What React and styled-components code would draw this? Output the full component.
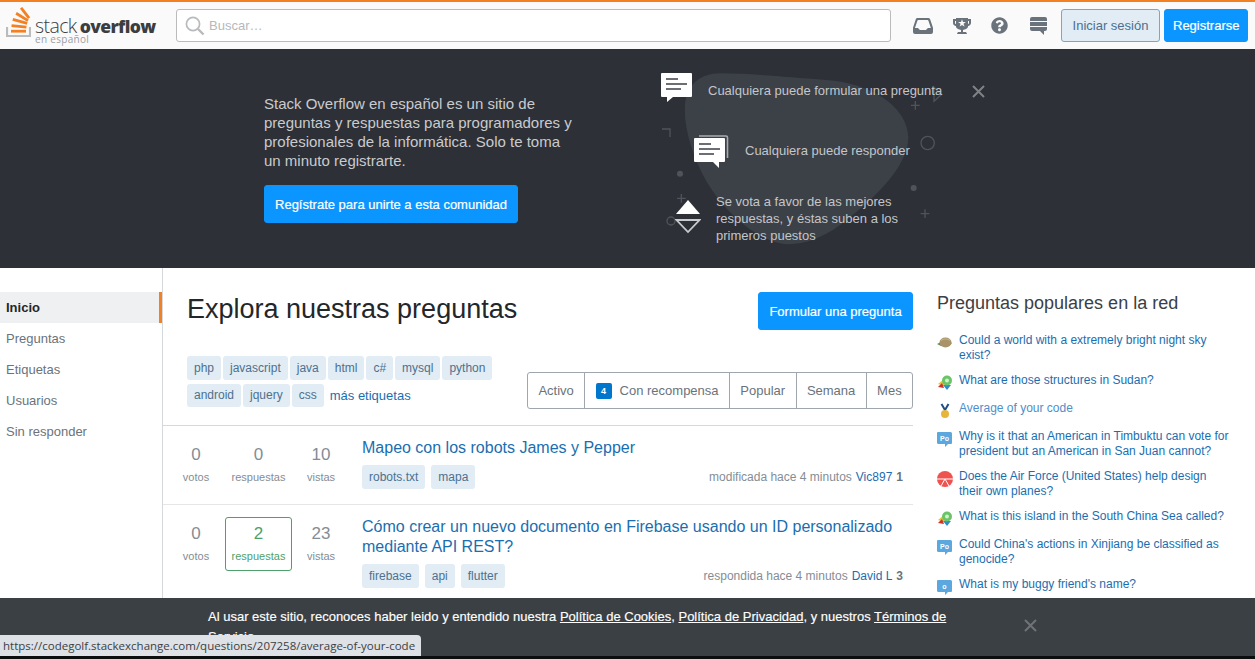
import React from 'react';
import styled, { createGlobalStyle } from 'styled-components';
import { FaQuestionCircle } from 'react-icons/fa';

const GlobalStyle = createGlobalStyle`
  html, body { margin: 0; padding: 0; height: 100%; overflow: hidden; background: #fff; }
  body { font-family: "Liberation Sans", Arial, sans-serif; font-size: 13px; color: #3b4045; }
  * { box-sizing: border-box; }
`;

const Page = styled.div`
  position: relative;
  width: 1255px;
  height: 659px;
  overflow: hidden;
`;

/* top bar */
const Topbar = styled.header`
  height: 49px;
  border-top: 2px solid #f48024;
  background: #fafafb;
  display: flex;
  align-items: center;
  padding: 0 6px;
`;

const Logo = styled.div`
  width: 170px;
  height: 30px;
  margin-bottom: 7px;
  display: flex;
  align-items: flex-start;
  gap: 4px;
  flex-shrink: 0;
`;

const LogoText = styled.div`
  display: flex;
  flex-direction: column;
  font-family: "Open Sans", sans-serif;
`;

const LogoName = styled.span`
  font-size: 19.5px;
  font-weight: 300;
  line-height: 20px;
  letter-spacing: -0.6px;
  color: #3b3d40;
  margin-top: 9px;
  white-space: nowrap;
  b { font-size: 17.5px; font-weight: 800; letter-spacing: -0.6px; margin-left: 3px; }
`;

const LogoSub = styled.span`
  font-size: 10px;
  line-height: 9px;
  color: #9a9ea3;
  letter-spacing: 0.3px;
  margin-top: -1px;
`;

const Search = styled.div`
  width: 715px;
  height: 33px;
  flex-shrink: 0;
  border: 1px solid #bcbbbb;
  border-radius: 3px;
  background: #fff;
  display: flex;
  align-items: center;
  gap: 4px;
  padding-left: 8px;
  color: #b5b8bc;
  font-size: 13px;
`;

const TopIcons = styled.nav`
  display: flex;
  align-items: center;
  margin-left: 22px;
  gap: 20px;
  color: #6a737c;
  svg:last-child { margin-left: 2px; }
`;

const Actions = styled.div`
  display: flex;
  gap: 4px;
  margin-left: 14px;
`;

const Button = styled.div`
  height: ${p => p.$h || 33}px;
  padding: 0 8px;
  border-radius: 3px;
  display: flex;
  align-items: center;
  justify-content: center;
  white-space: nowrap;
  font-size: 13px;
  flex-shrink: 0;
  color: ${p => (p.$ghost ? '#4d6f8f' : '#fff')};
  background: ${p => (p.$ghost ? '#e1ecf4' : '#0a95ff')};
  border: 1px solid ${p => (p.$ghost ? '#7aa7c7' : '#0a95ff')};
  -webkit-text-stroke: ${p => (p.$ghost ? '0' : '0.2px #fff')};
`;

const GhostButton = styled(Button)`
  width: 99px;
`;

const CommunityButton = styled(Button)`
  width: 254px;
`;

const AskButton = styled(Button)`
  width: 155px;
`;

/* hero */
const Hero = styled.section`
  position: relative;
  height: 219px;
  background: #2d3036;
  display: flex;
`;

const Backdrop = styled.svg`
  position: absolute;
  left: 640px;
  top: 6px;
  width: 360px;
  height: 210px;
`;

const CloseMark = styled.svg`
  position: absolute;
  left: ${p => p.$x}px;
  top: ${p => p.$y}px;
`;

const HeroLeft = styled.div`
  width: 397px;
  margin-left: 264px;
  padding-top: 45px;
`;

const HeroText = styled.p`
  margin: 0 0 15px;
  width: 312px;
  font-size: 15px;
  line-height: 19px;
  color: #c9cbcf;
`;

const HeroRight = styled.div`
  position: relative;
  padding-top: 23px;
`;

const Point = styled.div`
  display: flex;
  align-items: ${p => p.$top ? 'flex-start' : 'center'};
  margin-left: ${p => p.$indent}px;
  margin-top: ${p => p.$mt}px;
  height: ${p => p.$h}px;
  color: #c4c6ca;
  font-size: 13px;
`;

const PointIcon = styled.div`
  width: ${p => p.$w}px;
  flex-shrink: 0;
  display: flex;
  margin-top: ${p => p.$mt || 0}px;
`;

const PointText = styled.div`
  line-height: 17px;
  width: ${p => p.$w}px;
  white-space: ${p => p.$w ? 'normal' : 'nowrap'};
  margin-top: ${p => p.$mt || 0}px;
`;

/* body */
const Columns = styled.div`
  display: flex;
  height: 391px;
`;

const SideNav = styled.nav`
  width: 163px;
  flex-shrink: 0;
  border-right: 1px solid #d6d9dc;
  padding-top: 24px;
`;

const NavItem = styled.div`
  height: 31px;
  line-height: 31px;
  padding-left: 6px;
  color: ${p => (p.$active ? '#242729' : '#6a737c')};
  font-weight: ${p => (p.$active ? 'bold' : 'normal')};
  background: ${p => (p.$active ? '#eff0f1' : 'transparent')};
  border-right: 3px solid ${p => (p.$active ? '#f48024' : 'transparent')};
`;

const Main = styled.main`
  width: 750px;
  flex-shrink: 0;
`;

const MainHead = styled.div`
  display: flex;
  justify-content: space-between;
  padding: 24px 0 0 24px;
  height: 88px;
`;

const Title = styled.h1`
  margin: 0;
  font-size: 27px;
  font-weight: normal;
  line-height: 35px;
  color: #242729;
`;

const FilterRow = styled.div`
  display: flex;
  justify-content: space-between;
  align-items: flex-start;
  padding-left: 24px;
  height: 69px;
`;

const TagCloud = styled.div`
  width: 330px;
  display: flex;
  flex-wrap: wrap;
  gap: 4px 2px;
  align-items: center;
`;

const Tag = styled.span`
  display: inline-block;
  height: ${p => p.$h || 24}px;
  line-height: ${p => p.$h || 24}px;
  padding: 0 7px;
  border-radius: 3px;
  background: #e1ecf4;
  color: #4d7190;
  font-size: 12px;
`;

const MoreTags = styled.a`
  color: #1a6eb0;
  font-size: 13px;
  margin-left: 4px;
`;

const Tabs = styled.div`
  display: flex;
  width: 386px;
  height: 37px;
  margin-top: 16px;
  border: 1px solid #9fa6ad;
  border-radius: 3px;
  color: #6a737c;
`;

const TabItem = styled.div`
  flex: 1 1 auto;
  display: flex;
  align-items: center;
  justify-content: center;
  gap: 8px;
  padding: 0 10px;
  border-left: ${p => (p.$first ? '0' : '1px solid #9fa6ad')};
  font-size: 13px;
`;

const Bounty = styled.span`
  width: 16px;
  height: 16px;
  border-radius: 2px;
  background: #0077cc;
  color: #fff;
  font-size: 9px;
  font-weight: bold;
  display: flex;
  align-items: center;
  justify-content: center;
`;

const QuestionRow = styled.article`
  display: flex;
  border-top: 1px solid ${p => (p.$first ? '#d6d9dc' : '#e4e6e8')};
  height: ${p => p.$h}px;
`;

const Stats = styled.div`
  width: 195px;
  margin-left: 4px;
  flex-shrink: 0;
  padding-top: 12px;
  display: grid;
  grid-template-columns: 58px 67px 58px;
  align-items: start;
`;

const Stat = styled.div`
  height: 54px;
  text-align: center;
  color: ${p => (p.$ok ? '#4f9f6b' : '#848d95')};
  border: 1px solid ${p => (p.$ok ? '#4f9f6b' : 'transparent')};
  border-radius: 3px;
  strong { display: block; font-weight: normal; font-size: 17px; line-height: 20px; margin-top: 6px; }
  span { display: block; font-size: 11px; line-height: 14px; margin-top: 5px; }
`;

const Summary = styled.div`
  flex: 1;
  padding-top: 12px;
`;

const QTitle = styled.a`
  display: block;
  color: #1a6eb0;
  font-size: 16px;
  line-height: 20px;
  width: 540px;
`;

const QFoot = styled.div`
  display: flex;
  justify-content: space-between;
  align-items: center;
  margin-top: 7px;
  padding-right: 10px;
`;

const TagList = styled.div`
  display: flex;
  gap: 6px;
`;

const Meta = styled.div`
  font-size: 12px;
  color: #848d95;
  a { color: #1a6eb0; margin-left: 4px; }
  b { color: #6a737c; margin-left: 4px; }
`;

const Sidebar = styled.aside`
  margin-left: 24px;
  padding-top: 24px;
  width: 295px;
`;

const SideTitle = styled.h4`
  margin: 0 0 18px;
  font-size: 18px;
  font-weight: normal;
  line-height: 23px;
  color: #3b4045;
`;

const HotItem = styled.div`
  display: flex;
  gap: 6px;
  margin-bottom: 10px;
  font-size: 12px;
  line-height: 15px;
  color: ${p => (p.$visited ? '#4f8ec9' : '#1a6eb0')};
`;

const HotIcon = styled.svg`
  flex-shrink: 0;
  width: 16px;
  height: 16px;
  margin-top: 2px;
`;

const HotText = styled.span`
  width: 272px;
`;

/* overlays */
const CookieBar = styled.div`
  position: absolute;
  left: 0;
  right: 0;
  top: 598px;
  height: 58px;
  background: #3b4045;
  color: #fff;
  padding: 9px 0 0 208px;
  font-size: 13px;
  line-height: 20px;
  overflow: hidden;
  -webkit-text-stroke: 0.15px #fff;
  a { color: #fff; text-decoration: underline; }
`;

const CookieText = styled.div`
  width: 750px;
`;

const BlackStrip = styled.div`
  position: absolute;
  left: 0;
  right: 0;
  top: 656px;
  height: 3px;
  background: #0c0d0e;
`;

const StatusBubble = styled.div`
  position: absolute;
  left: 0;
  top: 635px;
  width: 421px;
  height: 21px;
  padding-left: 3px;
  background: #dee1e6;
  border-top-right-radius: 4px;
  font-family: "Open Sans", sans-serif;
  font-size: 11.5px;
  line-height: 21px;
  color: #3c4043;
  white-space: nowrap;
`;

function StackLogo() {
  return (
    <svg width="25" height="30" viewBox="0 0 25 30">
      <path d="M1 20v9h23v-9" fill="none" stroke="#bcbbbb" strokeWidth="2.2" />
      <g fill="#f48024">
        <rect x="5" y="22.8" width="15" height="2.8" />
        <rect x="5.5" y="18" width="15" height="2.8" transform="rotate(6 13 19.4)" />
        <rect x="6.5" y="13" width="15" height="2.8" transform="rotate(16 14 14.4)" />
        <rect x="9" y="8.5" width="14" height="2.8" transform="rotate(32 16 10)" />
        <rect x="12.5" y="4.5" width="13" height="2.8" transform="rotate(52 19 6)" />
      </g>
    </svg>
  );
}

function SearchIcon() {
  return (
    <svg width="20" height="20" viewBox="0 0 20 20" fill="none" stroke="#b8babd" strokeWidth="1.7">
      <circle cx="8" cy="8" r="6.6" />
      <path d="M13 13l5.5 5.5" strokeWidth="2.4" />
    </svg>
  );
}

function InboxIcon() {
  return (
    <svg width="20" height="18" viewBox="0 0 20 18" fill="currentColor">
      <path d="M4.63 1h10.56a2 2 0 0 1 1.94 1.35L20 10.79V15a2 2 0 0 1-2 2H2a2 2 0 0 1-2-2v-4.21l2.78-8.44c.25-.8 1-1.35 1.85-1.35zm8.28 12l2-2h2.95l-2.44-7.32a1 1 0 0 0-.95-.68H5.35a1 1 0 0 0-.95.68L1.96 11h2.95l2 2h6z" />
    </svg>
  );
}

function TrophyIcon() {
  return (
    <svg width="18" height="18" viewBox="0 0 18 18" fill="currentColor">
      <path d="M15 2V1H3v1H0v4c0 1.6 1.4 3 3 3v1c.4 1.5 3 2.6 5 3v2H5s-1 1.5-1 2h10c0-.4-1-2-1-2h-3v-2c2-.4 4.6-1.5 5-3V9c1.6-.2 3-1.4 3-3V2h-3zM3 7c-.5 0-1-.5-1-1V4h1v3zm8.4 2.5L9 8 6.6 9.4l1-2.7L5 5h3l1-2.7L10 5h2.8l-2.3 1.8 1 2.7h-.1zM16 6c0 .5-.5 1-1 1V4h1v2z" />
    </svg>
  );
}

function ChatStackIcon() {
  return (
    <svg width="17" height="18" viewBox="0 0 17 18" fill="currentColor">
      <path d="M0 2a2 2 0 0 1 2-2h13a2 2 0 0 1 2 2v2H0z" />
      <rect y="5" width="17" height="4" />
      <path d="M0 10h17v2a2 2 0 0 1-2 2h-1v4l-4-4H2a2 2 0 0 1-2-2z" />
    </svg>
  );
}

function BubbleIcon({ double }) {
  const shift = double ? 'translate(0 4)' : 'translate(0 1)';
  const bubble = double
    ? 'M1 0h29a1 1 0 0 1 1 1v22a1 1 0 0 1-1 1h-5v6l-6-6H1a1 1 0 0 1-1-1V1a1 1 0 0 1 1-1z'
    : 'M1 0h29a1 1 0 0 1 1 1v22a1 1 0 0 1-1 1H12l-6 5v-5H1a1 1 0 0 1-1-1V1a1 1 0 0 1 1-1z';
  return (
    <svg width="35" height="34" viewBox="0 0 35 34">
      {double && <path d="M5 2h27a1.5 1.5 0 0 1 1.5 1.5V24" fill="none" stroke="#a9acb0" strokeWidth="1.6" />}
      <path transform={shift} d={bubble} fill="#fff" />
      <g transform={shift} stroke="#3b4045" strokeWidth="1.6">
        <path d="M5 6h12M5 11h21M5 16h15" />
      </g>
    </svg>
  );
}

function VoteIcon() {
  return (
    <svg width="26" height="34" viewBox="0 0 26 34">
      <path d="M13 0l12 14H1z" fill="#fff" />
      <path d="M1.5 20h23L13 32z" fill="none" stroke="#c9cbcf" strokeWidth="1.8" />
    </svg>
  );
}

function HeroBackdrop() {
  return (
    <Backdrop viewBox="0 0 1080 630">
      <path
        d="M135 150C140 90 180 55 240 55C330 55 420 65 560 75C690 85 800 150 805 245C808 340 680 450 600 510C540 555 470 575 420 565C350 550 260 480 200 380C160 310 130 220 135 150Z"
        fill="#3c4047"
      />
      <g fill="none" stroke="#50545a" strokeWidth="4">
        <path d="M813 151h26M826 138v26M842 476h26M855 463v26M111 430h26M124 417v26" />
        <path d="M66 222h24v24" />
        <path d="M882 97l22 22-22 20z" />
        <circle cx="863" cy="264" r="20" />
        <circle cx="93" cy="498" r="12" />
      </g>
      <circle cx="120" cy="356" r="9" fill="#50545a" />
      <circle cx="821" cy="399" r="9" fill="#50545a" />
    </Backdrop>
  );
}

function Close({ x, y, color }) {
  return (
    <CloseMark $x={x} $y={y} width="13" height="13" viewBox="0 0 13 13" stroke={color} strokeWidth="2">
      <path d="M1 1l11 11M12 1L1 12" />
    </CloseMark>
  );
}

function SiteIcon({ site }) {
  if (site === 'world') {
    return (
      <HotIcon viewBox="0 0 16 16">
        <path d="M0 9l4-2 8 0 3 1-3 3H4z" fill="#5f8f4e" />
        <ellipse cx="8.5" cy="7.5" rx="6" ry="5" fill="#a9946a" />
        <path d="M4 5.5c3-2 6-2 9 0" stroke="#c9b98e" fill="none" />
      </HotIcon>
    );
  }
  if (site === 'travel') {
    return (
      <HotIcon viewBox="0 0 16 16">
        <path d="M1 9l6-5 1 7-4-1z" fill="#e8c33a" />
        <path d="M1 12l4-4 2 5z" fill="#c9342f" />
        <path d="M6 10l8 0-4 5z" fill="#2f8fc4" />
        <circle cx="10" cy="5.5" r="5" fill="#6ac46a" />
        <circle cx="10" cy="5.5" r="2" fill="#d6f0c8" />
      </HotIcon>
    );
  }
  if (site === 'golf') {
    return (
      <HotIcon viewBox="0 0 16 16">
        <path d="M4.5 1l3.5 6 3.5-6" stroke="#1f4f86" strokeWidth="2" fill="none" />
        <circle cx="8" cy="11" r="4" fill="#e6b53c" />
      </HotIcon>
    );
  }
  if (site === 'air') {
    return (
      <HotIcon viewBox="0 0 16 16">
        <circle cx="8" cy="8" r="8" fill="#ef5350" />
        <path d="M0 8h16M8 8l-4 7M8 8l4 7" stroke="#fff" strokeWidth="1" fill="none" />
      </HotIcon>
    );
  }
  return (
    <HotIcon viewBox="0 0 16 16">
      <path d="M1 1h12.5a1.5 1.5 0 0 1 1.5 1.5V12a1 1 0 0 1-1 1h-3l-3 3v-3H1.5A1.5 1.5 0 0 1 0 11.5V2a1 1 0 0 1 1-1z" fill="#5ba7de" />
      <text x="7.5" y="9.5" fontSize="7" fontWeight="bold" fill="#fff" textAnchor="middle" fontFamily="Liberation Sans">
        {site}
      </text>
    </HotIcon>
  );
}

const hot = [
  { site: 'world', text: 'Could a world with a extremely bright night sky exist?' },
  { site: 'travel', text: 'What are those structures in Sudan?' },
  { site: 'golf', text: 'Average of your code', visited: true },
  { site: 'Po', text: 'Why is it that an American in Timbuktu can vote for president but an American in San Juan cannot?' },
  { site: 'air', text: 'Does the Air Force (United States) help design their own planes?' },
  { site: 'travel', text: 'What is this island in the South China Sea called?' },
  { site: 'Po', text: "Could China's actions in Xinjiang be classified as genocide?" },
  { site: 'o', text: "What is my buggy friend's name?" },
];

const questions = [
  {
    votes: 0, answers: 0, views: 10, h: 79,
    title: 'Mapeo con los robots James y Pepper',
    tags: ['robots.txt', 'mapa'],
    when: 'modificada hace 4 minutos', user: 'Vic897', rep: 1,
  },
  {
    votes: 0, answers: 2, views: 23, h: 100,
    title: 'Cómo crear un nuevo documento en Firebase usando un ID personalizado mediante API REST?',
    tags: ['firebase', 'api', 'flutter'],
    when: 'respondida hace 4 minutos', user: 'David L', rep: 3,
  },
];

const firstTags = ['php', 'javascript', 'java', 'html', 'c#', 'mysql', 'python'];
const secondTags = ['android', 'jquery', 'css'];

export default function App() {
  return (
    <Page>
      <GlobalStyle />
      <Topbar>
        <Logo>
          <StackLogo />
          <LogoText>
            <LogoName>stack<b>overflow</b></LogoName>
            <LogoSub>en español</LogoSub>
          </LogoText>
        </Logo>
        <Search><SearchIcon />Buscar…</Search>
        <TopIcons>
          <InboxIcon />
          <TrophyIcon />
          <FaQuestionCircle size={17} />
          <ChatStackIcon />
        </TopIcons>
        <Actions>
          <GhostButton $ghost>Iniciar sesión</GhostButton>
          <Button>Registrarse</Button>
        </Actions>
      </Topbar>

      <Hero>
        <HeroBackdrop />
        <Close x={972} y={36} color="#7f8388" />
        <HeroLeft>
          <HeroText>
            Stack Overflow en español es un sitio de preguntas y respuestas para programadores y
            profesionales de la informática. Solo te toma un minuto registrarte.
          </HeroText>
          <CommunityButton $h={38}>Regístrate para unirte a esta comunidad</CommunityButton>
        </HeroLeft>
        <HeroRight>
          <Point $indent={0} $mt={0} $h={34}>
            <PointIcon $w={47}><BubbleIcon /></PointIcon>
            <PointText $mt={2}>Cualquiera puede formular una pregunta</PointText>
          </Point>
          <Point $indent={33} $mt={26} $h={37}>
            <PointIcon $w={51}><BubbleIcon double /></PointIcon>
            <PointText>Cualquiera puede responder</PointText>
          </Point>
          <Point $indent={14} $mt={24} $h={51} $top>
            <PointIcon $w={41} $mt={7}><VoteIcon /></PointIcon>
            <PointText $w={210}>Se vota a favor de las mejores respuestas, y éstas suben a los primeros puestos</PointText>
          </Point>
        </HeroRight>
      </Hero>

      <Columns>
        <SideNav>
          <NavItem $active>Inicio</NavItem>
          <NavItem>Preguntas</NavItem>
          <NavItem>Etiquetas</NavItem>
          <NavItem>Usuarios</NavItem>
          <NavItem>Sin responder</NavItem>
        </SideNav>

        <Main>
          <MainHead>
            <Title>Explora nuestras preguntas</Title>
            <AskButton $h={38}>Formular una pregunta</AskButton>
          </MainHead>
          <FilterRow>
            <TagCloud>
              {firstTags.map(t => <Tag key={t}>{t}</Tag>)}
              {secondTags.map(t => <Tag key={t} $h={23}>{t}</Tag>)}
              <MoreTags>más etiquetas</MoreTags>
            </TagCloud>
            <Tabs>
              <TabItem $first>Activo</TabItem>
              <TabItem><Bounty>4</Bounty>Con recompensa</TabItem>
              <TabItem>Popular</TabItem>
              <TabItem>Semana</TabItem>
              <TabItem>Mes</TabItem>
            </Tabs>
          </FilterRow>
          {questions.map((q, i) => (
            <QuestionRow key={q.title} $first={i === 0} $h={q.h}>
              <Stats>
                <Stat><strong>{q.votes}</strong><span>votos</span></Stat>
                <Stat $ok={q.answers > 0}><strong>{q.answers}</strong><span>respuestas</span></Stat>
                <Stat><strong>{q.views}</strong><span>vistas</span></Stat>
              </Stats>
              <Summary>
                <QTitle>{q.title}</QTitle>
                <QFoot>
                  <TagList>{q.tags.map(t => <Tag key={t}>{t}</Tag>)}</TagList>
                  <Meta>{q.when}<a>{q.user}</a><b>{q.rep}</b></Meta>
                </QFoot>
              </Summary>
            </QuestionRow>
          ))}
        </Main>

        <Sidebar>
          <SideTitle>Preguntas populares en la red</SideTitle>
          {hot.map(h => (
            <HotItem key={h.text} $visited={h.visited}>
              <SiteIcon site={h.site} />
              <HotText>{h.text}</HotText>
            </HotItem>
          ))}
        </Sidebar>
      </Columns>

      <CookieBar>
        <CookieText>
          Al usar este sitio, reconoces haber leido y entendido nuestra <a>Política de Cookies</a>,{' '}
          <a>Política de Privacidad</a>, y nuestros <a>Términos de Servicio</a>.
        </CookieText>
        <Close x={1024} y={21} color="#6f7377" />
      </CookieBar>
      <BlackStrip />
      <StatusBubble>https://codegolf.stackexchange.com/questions/207258/average-of-your-code</StatusBubble>
    </Page>
  );
}
